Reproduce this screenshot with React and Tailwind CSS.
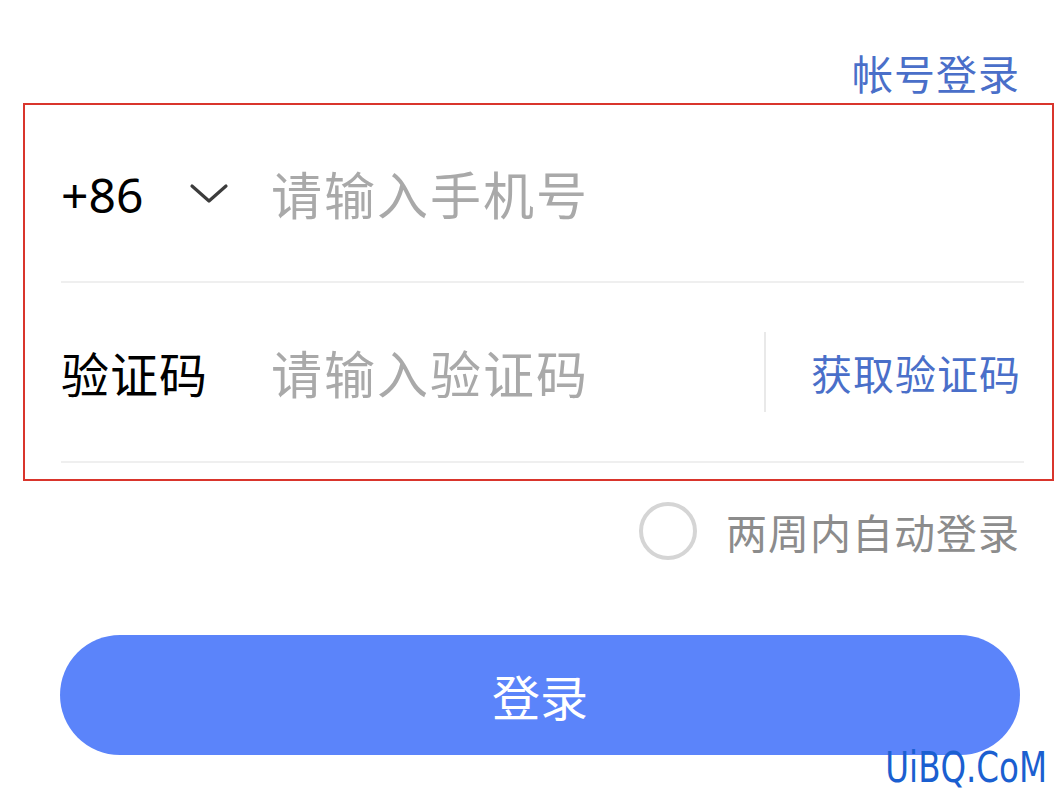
import React, { useState } from "react";

const cjk = { fontFamily: '"Noto Sans CJK SC", "Noto Sans", sans-serif' };

const Chevron = () => (
    <svg width="40" height="24" viewBox="0 0 40 24" fill="none">
        <path d="M3 5 L20 20 L37 5" stroke="#3c3c3c" strokeWidth="3.2" strokeLinecap="round" strokeLinejoin="round" />
    </svg>
);

export default function App() {
    const [remember, setRemember] = useState(false);

    return (
        <div className="w-[1057px] h-[793px] bg-white overflow-hidden relative font-['Noto_Sans_CJK_SC','Noto_Sans',sans-serif]">
            {/* top link */}
            <div className="flex justify-end pr-[37px] pt-[52px] h-[103px]">
                <span className="text-[41px] leading-none tracking-[1px] text-[#4a6fc9]">帐号登录</span>
            </div>

            {/* form box */}
            <div className="ml-[23px] mr-[3px] border-2 border-[#d9352c] pl-[36px] pr-[28px] pb-[16px]">
                {/* phone row */}
                <div className="h-[178px] flex items-center border-b-2 border-[#efefef]">
                    <span className="text-[48px] leading-none text-black w-[128px] pt-[4px]" style={{ fontFamily: '"Noto Sans", sans-serif' }}>+86</span>
                    <span className="w-[82px] flex items-center"><Chevron /></span>
                    <input
                        className="flex-1 text-[51px] leading-none tracking-[2px] outline-none placeholder:text-[#a9a9a9] text-black bg-transparent"
                        style={cjk}
                        placeholder="请输入手机号"
                    />
                </div>

                {/* code row */}
                <div className="h-[180px] flex items-center border-b-2 border-[#efefef]">
                    <span className="text-[48px] leading-none tracking-[1px] text-black w-[210px]">验证码</span>
                    <input
                        className="w-[491px] text-[51px] leading-none tracking-[2px] outline-none placeholder:text-[#a9a9a9] text-black bg-transparent"
                        style={cjk}
                        placeholder="请输入验证码"
                    />
                    <div className="w-[2px] h-[80px] bg-[#e9e9e9] ml-[2px]" />
                    <button className="ml-auto mr-[3px] text-[41px] leading-none tracking-[1px] text-[#4a6fc9]">获取验证码</button>
                </div>
            </div>

            {/* remember */}
            <div className="flex justify-end items-center pr-[37px] mt-[20px] h-[60px] gap-[29px]">
                <button
                    onClick={() => setRemember(!remember)}
                    className={`w-[58px] h-[58px] rounded-full border-[4px] ${remember ? "border-[#5b84fa] bg-[#5b84fa]" : "border-[#d5d5d5]"}`}
                />
                <span className="text-[41px] leading-none tracking-[1px] text-[#8c8c8c]">两周内自动登录</span>
            </div>

            {/* login button */}
            <div className="pl-[60px] pr-[37px] mt-[74px]">
                <button className="w-full h-[120px] rounded-full bg-[#5b84fa] text-white text-[48px] leading-none">登录</button>
            </div>

            {/* watermark */}
            <div className="absolute right-[10px] bottom-[4px] origin-right scale-x-[0.86] text-[42px] leading-none text-[#1b5fd0]" style={{ fontFamily: '"DejaVu Sans Condensed", "Liberation Sans", sans-serif' }}>
                UiBQ.CoM
            </div>
        </div>
    );
}
